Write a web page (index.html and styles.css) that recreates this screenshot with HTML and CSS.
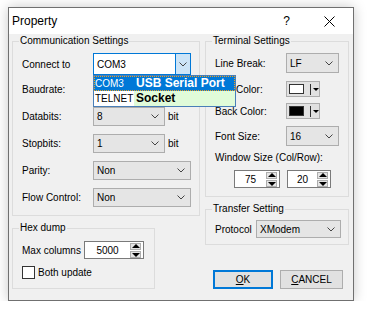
FILE: index.html
```html
<!DOCTYPE html>
<html lang="en">
<head>
    <meta charset="UTF-8">
    <title>Property</title>
    <link rel="stylesheet" href="styles.css">
</head>
<body>

    <div class="window">
        <!-- Title bar -->
        <div class="titlebar">
            <span class="title">Property</span>
            <span class="help">?</span>
            <span class="close">
                <svg width="11" height="11" viewBox="0 0 11 11"><path d="M0.5 0.5 L10.5 10.5 M10.5 0.5 L0.5 10.5" stroke="#000" stroke-width="1" fill="none"/></svg>
            </span>
        </div>

        <div class="dialog">
            <!-- Left column -->
            <div class="col-left">
                <fieldset class="group comm">
                    <legend>Communication Settings</legend>
                    <div class="rows">
                        <div class="row connect">
                            <span class="label">Connect to</span>
                            <div class="combo">
                                <span class="combo-text">COM3</span>
                                <span class="combo-btn">
                                    <svg width="8" height="5" viewBox="0 0 8 5"><path d="M0.5 0.5 L4 4 L7.5 0.5" stroke="#444" fill="none"/></svg>
                                </span>
                                <div class="droplist">
                                    <div class="opt selected"><span class="port">COM3</span><span class="desc">USB Serial Port</span></div>
                                    <div class="opt"><span class="port">TELNET</span><span class="desc green">Socket</span></div>
                                </div>
                            </div>
                        </div>
                        <div class="row">
                            <span class="label">Baudrate:</span>
                            <div class="select wide"></div>
                        </div>
                        <div class="row">
                            <span class="label">Databits:</span>
                            <div class="select narrow"><span>8</span><svg width="8" height="5" viewBox="0 0 8 5"><path d="M0.5 0.5 L4 4 L7.5 0.5" stroke="#444" fill="none"/></svg></div>
                            <span class="unit">bit</span>
                        </div>
                        <div class="row">
                            <span class="label">Stopbits:</span>
                            <div class="select narrow"><span>1</span><svg width="8" height="5" viewBox="0 0 8 5"><path d="M0.5 0.5 L4 4 L7.5 0.5" stroke="#444" fill="none"/></svg></div>
                            <span class="unit">bit</span>
                        </div>
                        <div class="row">
                            <span class="label">Parity:</span>
                            <div class="select wide"><span>Non</span><svg width="8" height="5" viewBox="0 0 8 5"><path d="M0.5 0.5 L4 4 L7.5 0.5" stroke="#444" fill="none"/></svg></div>
                        </div>
                        <div class="row">
                            <span class="label">Flow Control:</span>
                            <div class="select wide"><span>Non</span><svg width="8" height="5" viewBox="0 0 8 5"><path d="M0.5 0.5 L4 4 L7.5 0.5" stroke="#444" fill="none"/></svg></div>
                        </div>
                    </div>
                </fieldset>

                <fieldset class="group hex">
                    <legend>Hex dump</legend>
                    <div class="row hex-row">
                        <span class="label hex-label">Max columns</span>
                        <div class="spin hex-spin">
                            <span class="spin-val">5000</span>
                            <span class="spin-btns"><span class="up"></span><span class="down"></span></span>
                        </div>
                    </div>
                    <div class="row check-row">
                        <span class="checkbox"></span>
                        <span>Both update</span>
                    </div>
                </fieldset>
            </div>

            <!-- Right column -->
            <div class="col-right">
                <fieldset class="group terminal">
                    <legend>Terminal Settings</legend>
                    <div class="row r-line">
                        <span class="label">Line Break:</span>
                        <div class="select small"><span>LF</span><svg width="8" height="5" viewBox="0 0 8 5"><path d="M0.5 0.5 L4 4 L7.5 0.5" stroke="#444" fill="none"/></svg></div>
                    </div>
                    <div class="row r-color">
                        <!-- first word is hidden under the open list -->
                        <span class="label color-label">Color:</span>
                        <div class="colorbtn"><span class="swatch white"></span><span class="sep"></span><span class="tri"></span></div>
                    </div>
                    <div class="row r-back">
                        <span class="label">Back Color:</span>
                        <div class="colorbtn"><span class="swatch black"></span><span class="sep"></span><span class="tri"></span></div>
                    </div>
                    <div class="row r-font">
                        <span class="label">Font Size:</span>
                        <div class="select small"><span>16</span><svg width="8" height="5" viewBox="0 0 8 5"><path d="M0.5 0.5 L4 4 L7.5 0.5" stroke="#444" fill="none"/></svg></div>
                    </div>
                    <div class="r-winlabel">Window Size (Col/Row):</div>
                    <div class="row r-spins">
                        <div class="spin col-spin">
                            <span class="spin-val">75</span>
                            <span class="spin-btns"><span class="up"></span><span class="down"></span></span>
                        </div>
                        <div class="spin row-spin">
                            <span class="spin-val">20</span>
                            <span class="spin-btns"><span class="up"></span><span class="down"></span></span>
                        </div>
                    </div>
                </fieldset>

                <fieldset class="group transfer">
                    <legend>Transfer Setting</legend>
                    <div class="row">
                        <span class="label proto-label">Protocol</span>
                        <div class="select proto"><span>XModem</span><svg width="8" height="5" viewBox="0 0 8 5"><path d="M0.5 0.5 L4 4 L7.5 0.5" stroke="#444" fill="none"/></svg></div>
                    </div>
                </fieldset>

                <div class="buttons">
                    <div class="btn ok"><u>O</u>K</div>
                    <div class="btn cancel"><u>C</u>ANCEL</div>
                </div>
            </div>
        </div>
    </div>

</body>
</html>
```

FILE: styles.css
```css
/* General styles */
body {
    font-family: 'Liberation Sans', Arial, sans-serif;
    font-size: 10px;
    color: #000;
    margin: 0;
    padding: 7px 0 0 8px;
    background-color: #fff;
}
* {
    box-sizing: border-box;
}

/* Window frame */
.window {
    width: 346px;
    height: 294px;
    border: 1px solid #707070;
    background-color: #f0f0f0;
    box-shadow: 0 0 12px rgba(0, 0, 0, 0.22);
}
.titlebar {
    height: 26px;
    background-color: #fff;
    display: flex;
    align-items: center;
    padding-left: 3px;
}
.titlebar .title {
    flex: 1;
    font-size: 12px;
}
.titlebar .help {
    font-size: 12px;
    margin-right: 34px;
}
.titlebar .close {
    display: flex;
    margin-right: 18px;
}

/* Dialog body */
.dialog {
    display: flex;
    gap: 5px;
    padding: 0 4px 0 3px;
}
.col-left {
    width: 188px;
}
.col-right {
    width: 144px;
}

/* Group boxes */
.group {
    margin: 0;
    border: 1px solid #dcdcdc;
    padding: 5px 7px 8px 9px;
    min-width: 0;
}
.group legend {
    padding: 0 1px;
    margin-left: -3px;
    line-height: 14px;
}
.hex {
    width: 143px;
    margin-top: 5px;
    padding-top: 6px;
    padding-bottom: 9px;
}
.terminal {
    padding-right: 9px;
    padding-bottom: 8px;
}
.transfer {
    margin-top: 5px;
    padding-top: 4px;
    padding-bottom: 6px;
}

/* Rows */
.rows {
    display: flex;
    flex-direction: column;
    gap: 8px;
}
.row {
    display: flex;
    align-items: center;
}
.row.connect {
    margin-bottom: -3px;
}
.label {
    width: 71px;
    flex-shrink: 0;
}
.color-label {
    padding-left: 21px;
}
.unit {
    margin-left: 3px;
}

/* Drop-down boxes */
.select {
    height: 19px;
    border: 1px solid #adadad;
    background-color: #e5e5e5;
    display: flex;
    align-items: center;
    justify-content: space-between;
    padding: 0 5px 0 3px;
}
.select.wide {
    width: 98px;
}
.select.narrow {
    width: 72px;
}
.select.small {
    width: 53px;
    height: 20px;
}
.select.proto {
    width: 86px;
    height: 18px;
}
.proto-label {
    width: 41px;
}

/* Editable combo with open list */
.combo {
    position: relative;
    width: 98px;
    height: 22px;
    border: 1px solid #0078d7;
    background-color: #fff;
    display: flex;
    align-items: center;
}
.combo-text {
    flex: 1;
    padding-left: 3px;
}
.combo-btn {
    width: 15px;
    height: 100%;
    background-color: #cce4f7;
    border-left: 1px solid #0078d7;
    display: flex;
    align-items: center;
    justify-content: center;
}
.droplist {
    position: absolute;
    top: 21px;
    left: -1px;
    width: 143px;
    border: 1px solid #4a7fb8;
    background-color: #fff;
}
.opt {
    display: flex;
    height: 15px;
    line-height: 15px;
}
.opt .port {
    width: 40px;
    padding-left: 1px;
}
.opt .desc {
    flex: 1;
    font-weight: bold;
    font-size: 12px;
    padding-left: 2px;
}
.opt .desc.green {
    background-color: #e0fbd9;
}
.opt.selected {
    background-color: #0078d7;
    color: #fff;
    outline: 1px dotted #f0a020;
    outline-offset: -1px;
}

/* Spin edits */
.spin {
    height: 18px;
    border: 1px solid #7a7a7a;
    background-color: #fff;
    display: flex;
    align-items: center;
    padding-right: 2px;
}
.spin-val {
    flex: 1;
    text-align: center;
}
.spin-btns {
    display: flex;
    flex-direction: column;
    gap: 1px;
}
.spin-btns span {
    width: 11px;
    height: 7px;
    background-color: #e5e5e5;
    border: 1px solid #adadad;
    position: relative;
}
.spin-btns .up::after,
.spin-btns .down::after {
    content: "";
    position: absolute;
    left: 1px;
    border-left: 4px solid transparent;
    border-right: 4px solid transparent;
}
.spin-btns .up::after {
    top: 0;
    border-bottom: 4px solid #000;
}
.spin-btns .down::after {
    top: 1px;
    border-top: 4px solid #000;
}
.hex-label {
    width: 62px;
}
.hex-spin {
    width: 60px;
}
.hex-row {
    height: 18px;
}
.check-row {
    margin-top: 7px;
    height: 13px;
}
.checkbox {
    width: 13px;
    height: 13px;
    border: 1px solid #333;
    background-color: #fff;
    margin-right: 3px;
}

/* Terminal settings rows */
.r-line {
    height: 20px;
}
.r-color {
    margin-top: 8px;
    height: 16px;
}
.r-back {
    margin-top: 6px;
    height: 16px;
}
.r-font {
    margin-top: 7px;
    height: 20px;
}
.r-winlabel {
    margin-top: 5px;
    line-height: 14px;
}
.r-spins {
    margin-top: 5px;
    padding-left: 19px;
    gap: 7px;
}
.col-spin {
    width: 46px;
}
.row-spin {
    width: 44px;
}

/* Colour buttons */
.colorbtn {
    width: 34px;
    height: 16px;
    border: 1px solid #adadad;
    background-color: #e1e1e1;
    display: flex;
    align-items: center;
    padding-left: 2px;
}
.swatch {
    width: 16px;
    height: 10px;
    border: 1px solid #333;
}
.swatch.white {
    background-color: #fff;
}
.swatch.black {
    background-color: #000;
}
.sep {
    width: 1px;
    height: 11px;
    background-color: #333;
    margin-left: 6px;
}
.tri {
    margin-left: 2px;
    border-left: 3px solid transparent;
    border-right: 3px solid transparent;
    border-top: 3px solid #000;
}

/* Buttons */
.buttons {
    display: flex;
    gap: 7px;
    margin-top: 25px;
    padding-left: 8px;
}
.btn {
    height: 19px;
    border: 1px solid #adadad;
    background-color: #e1e1e1;
    display: flex;
    align-items: center;
    justify-content: center;
}
.btn.ok {
    width: 60px;
    border: 2px solid #0078d7;
}
.btn.cancel {
    width: 63px;
}
```
